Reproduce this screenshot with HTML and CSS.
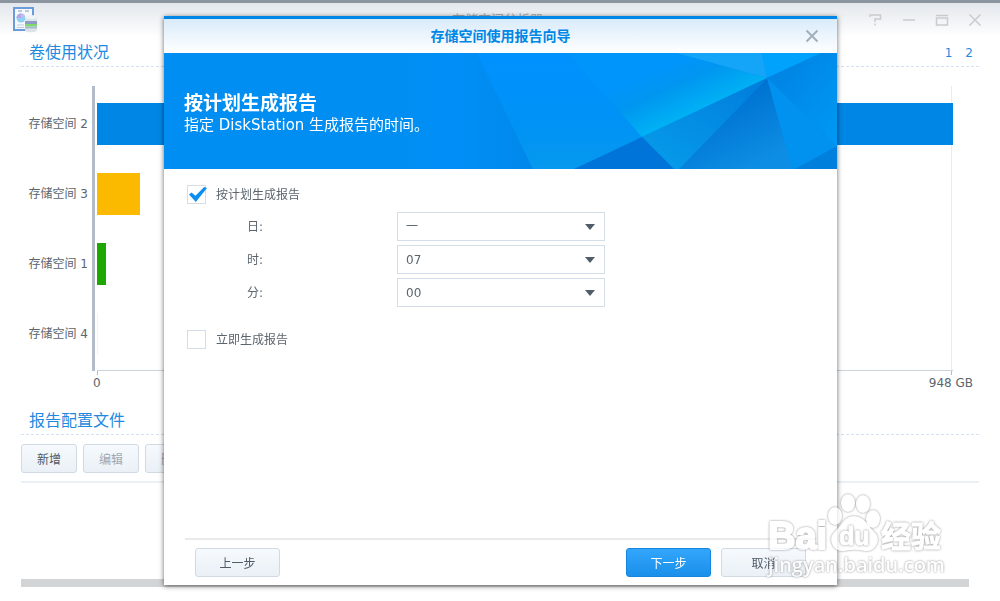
FILE: index.html
```html
<!DOCTYPE html>
<html lang="zh-CN">
<head>
    <meta charset="UTF-8">
    <meta name="viewport" content="width=device-width, initial-scale=1.0">
    <title>存储空间分析器</title>
    <link rel="stylesheet" href="styles.css">
</head>
<body>
    <div class="window">
        <header class="window-header">
            <svg class="app-icon" width="24" height="26" viewBox="0 0 24 26">
                <rect x="1" y="1" width="19" height="22" fill="#f5f8fd" stroke="#6c9bdc" stroke-width="2"/>
                <path d="M5 4h4M12 4h4" stroke="#a9b8cc" stroke-width="1.5"/>
                <circle cx="8" cy="11" r="4.5" fill="#8fd0f5"/>
                <path d="M8 11V6.500a4.500 4.500 0 0 0-4.500 4.500z" fill="#b9a5e6"/>
                <path d="M8 11l4-2a4.500 4.500 0 0 0-4-2.500z" fill="#c9b8ee"/>
                <path d="M4 18h7M4 20.500h7" stroke="#c3ccd6"/>
                <path d="M12 10v13c0 3 12 3 12 0V10z" fill="#dce4ea"/>
                <ellipse cx="18" cy="10" rx="6" ry="2" fill="#eef3f6"/>
                <path d="M12 14h12v3H12z" fill="#8d9bc6"/>
                <path d="M12 17h12v2.500H12z" fill="#7fd96c"/>
                <path d="M12 19.500h12v2H12z" fill="#a5bdc6"/>
            </svg>
            <h1 class="window-title">存储空间分析器</h1>
            <div class="window-controls">
                <button type="button" class="icon-button" aria-label="帮助">
                    <svg width="14" height="12" viewBox="0 0 14 12"><path d="M1 3V1h10.500v4H6v3M6 9.500v2"/></svg>
                </button>
                <button type="button" class="icon-button" aria-label="最小化">
                    <svg width="14" height="12" viewBox="0 0 14 12"><path d="M1 6h12"/></svg>
                </button>
                <button type="button" class="icon-button" aria-label="最大化">
                    <svg width="14" height="12" viewBox="0 0 14 12"><path d="M1 1.500h12M1.500 4h11v7h-11z"/></svg>
                </button>
                <button type="button" class="icon-button" aria-label="关闭">
                    <svg width="14" height="12" viewBox="0 0 14 12"><path d="M1.500 .5l11 11M12.500 .5l-11 11"/></svg>
                </button>
            </div>
        </header>

        <main class="content">
            <div class="section-header">
                <h2>卷使用状况</h2>
                <nav class="pager">
                    <a href="#page1">1</a>
                    <a href="#page2">2</a>
                </nav>
            </div>

            <div class="chart">
                <div class="chart-labels">
                    <span>存储空间 2</span>
                    <span>存储空间 3</span>
                    <span>存储空间 1</span>
                    <span>存储空间 4</span>
                </div>
                <div class="chart-plot">
                    <div class="bar bar-blue" style="width: 100%"></div>
                    <div class="bar bar-yellow" style="width: 5%"></div>
                    <div class="bar bar-green" style="width: 1%"></div>
                    <div class="bar bar-empty" style="width: 0"></div>
                </div>
            </div>
            <div class="chart-scale">
                <span>0</span>
                <span>948 GB</span>
            </div>

            <div class="section-header">
                <h2>报告配置文件</h2>
            </div>
            <div class="toolbar">
                <button type="button" class="button">新增</button>
                <button type="button" class="button" disabled>编辑</button>
                <button type="button" class="button" disabled>删除</button>
            </div>
            <div class="profile-list"></div>
        </main>
    </div>

    <div class="overlay">
        <form class="dialog" role="dialog" aria-labelledby="wizardTitle">
            <div class="dialog-header">
                <h2 id="wizardTitle">存储空间使用报告向导</h2>
                <button type="button" class="icon-button" aria-label="关闭">
                    <svg width="14" height="14" viewBox="0 0 14 14"><path d="M1.500 1.500l11 11M12.500 1.500l-11 11"/></svg>
                </button>
            </div>

            <div class="banner">
                <svg class="banner-art" viewBox="0 0 674 116" preserveAspectRatio="xMaxYMid slice">
                    <defs>
                        <linearGradient id="fold" x1="0" y1="0" x2="1" y2="0">
                            <stop offset="0" stop-color="#008ef2"/>
                            <stop offset=".4" stop-color="#008ff7"/>
                            <stop offset="1" stop-color="#0088ea"/>
                        </linearGradient>
                        <linearGradient id="mid" x1="0" y1="0" x2="0" y2="1">
                            <stop offset="0" stop-color="#0091ff"/>
                            <stop offset=".6" stop-color="#0092f5"/>
                            <stop offset="1" stop-color="#0699ee"/>
                        </linearGradient>
                        <linearGradient id="cyan" gradientUnits="userSpaceOnUse" x1="520" y1="5" x2="545" y2="60">
                            <stop offset="0" stop-color="#0095fa"/>
                            <stop offset=".35" stop-color="#0096f0"/>
                            <stop offset="1" stop-color="#00b6f5"/>
                        </linearGradient>
                        <linearGradient id="deep" x1="0" y1="0" x2=".6" y2="1">
                            <stop offset="0" stop-color="#006bcb"/>
                            <stop offset=".4" stop-color="#0074d2"/>
                            <stop offset="1" stop-color="#0d8de4"/>
                        </linearGradient>
                        <linearGradient id="wing" x1="1" y1="0" x2=".2" y2="1">
                            <stop offset="0" stop-color="#007cdb"/>
                            <stop offset="1" stop-color="#069aea"/>
                        </linearGradient>
                        <linearGradient id="side" x1="0" y1="0" x2="1" y2="1">
                            <stop offset="0" stop-color="#0080e0"/>
                            <stop offset="1" stop-color="#0099f5"/>
                        </linearGradient>
                    </defs>
                    <path d="M240 0h74l56 116H240z" fill="url(#fold)"/>
                    <path d="M314 0h90l75 84-68 32h-41z" fill="url(#mid)"/>
                    <path d="M404 0h110l90 25-125 59z" fill="url(#cyan)"/>
                    <path d="M514 0h85l5 25z" fill="#15a5f8"/>
                    <path d="M599 0h59l-54 25z" fill="#00a2fc"/>
                    <path d="M658 0h16v93l-70-68z" fill="url(#side)"/>
                    <path d="M604 25l70 68-40 23h-5z" fill="#0092ee"/>
                    <path d="M604 25l25 91H516z" fill="url(#deep)"/>
                    <path d="M604 25l-88 91h-5l-32-32z" fill="url(#wing)"/>
                    <path d="M479 84l32 32H411z" fill="#0074d8"/>
                    <path d="M674 93v23h-42z" fill="#0080dc"/>
                </svg>
                <div class="banner-text">
                    <h3>按计划生成报告</h3>
                    <p>指定 DiskStation 生成报告的时间。</p>
                </div>
            </div>

            <div class="dialog-body">
                <div class="check-row">
                    <input type="checkbox" id="schedule" checked>
                    <label for="schedule">按计划生成报告</label>
                </div>
                <div class="fields">
                    <label for="day">日:</label>
                    <div class="select-box">
                        <select id="day"><option>一</option></select>
                    </div>
                    <label for="hour">时:</label>
                    <div class="select-box">
                        <select id="hour"><option>07</option></select>
                    </div>
                    <label for="minute">分:</label>
                    <div class="select-box">
                        <select id="minute"><option>00</option></select>
                    </div>
                </div>
                <div class="check-row">
                    <input type="checkbox" id="now">
                    <label for="now">立即生成报告</label>
                </div>
            </div>

            <div class="dialog-footer">
                <button type="button" class="button">上一步</button>
                <button type="button" class="button button-primary">下一步</button>
                <button type="button" class="button">取消</button>
            </div>
        </form>
    </div>

    <svg class="watermark" width="184" height="90" viewBox="0 0 184 90">
        <text class="mark-brand" x="2" y="56">Bai</text>
        <g class="mark-paw">
            <ellipse cx="69" cy="23" rx="6" ry="8"/>
            <ellipse cx="82" cy="10" rx="6" ry="8"/>
            <ellipse cx="97" cy="11" rx="6" ry="8"/>
            <ellipse cx="107" cy="26" rx="6" ry="8"/>
            <path d="M88 24c-10 0-12 10-18 15-8 7-2 19 8 18 8-2 13-2 21 0 10 1 16-11 8-18-6-5-9-15-19-15z"/>
        </g>
        <text class="mark-du" x="73" y="52">du</text>
        <text class="mark-cn" x="115" y="54">经验</text>
        <text class="mark-url" x="2" y="79">jingyan.baidu.com</text>
    </svg>
</body>
</html>
```
FILE: styles.css
```css
:root {
    --blue: #0086e5;
    --link-blue: #1f8ae0;
    --text: #5b656e;
    --line: #d5dee8;
}

* {
    box-sizing: border-box;
}

body {
    margin: 0;
    font-family: "DejaVu Sans", "Noto Sans CJK SC", sans-serif;
    font-size: 12px;
    line-height: 18px;
    color: var(--text);
    background: #ffffff;
    overflow: hidden;
}

h1, h2, h3, p {
    margin: 0;
    font-weight: normal;
}

button, select {
    font: inherit;
    color: inherit;
}

/* Main window */
.window {
    height: 100vh;
    display: flex;
    flex-direction: column;
    border-top: 3px solid #8b95a0;
}

.window-header {
    display: grid;
    grid-template-columns: 1fr auto 1fr;
    align-items: center;
    height: 34px;
    padding: 0 18px 0 13px;
    background: linear-gradient(#e3e7ec, #ffffff);
}

.window-title {
    font-size: 13px;
    color: #a9adb1;
}

.window-controls {
    display: flex;
    justify-content: flex-end;
    gap: 19px;
}

.icon-button {
    display: flex;
    padding: 0;
    border: none;
    background: none;
    color: #c9cccf;
    cursor: pointer;
}

.icon-button svg {
    fill: none;
    stroke: currentColor;
    stroke-width: 2;
}

.window-controls svg {
    stroke-width: 1.5px;
}

.content {
    flex: 1;
    display: flex;
    flex-direction: column;
    padding: 0 21px 14px;
}

.section-header {
    display: flex;
    align-items: center;
    justify-content: space-between;
    height: 30px;
    padding: 2px 6px 0 8px;
    border-bottom: 1px dashed #d3e2f0;
}

.section-header h2 {
    font-size: 16px;
    line-height: 24px;
    color: var(--link-blue);
}

.pager {
    display: flex;
    gap: 13px;
}

.pager a {
    color: var(--link-blue);
    text-decoration: none;
}

/* Usage chart */
.chart {
    display: flex;
    margin-top: 19px;
    padding-right: 26px;
}

.chart-labels {
    display: flex;
    flex-direction: column;
    gap: 28px;
    width: 74px;
    padding: 17px 4px 16px 0;
    border-right: 3px solid #b4bcc9;
    text-align: right;
    white-space: nowrap;
}

.chart-labels span {
    line-height: 42px;
}

.chart-plot {
    flex: 1;
    display: flex;
    flex-direction: column;
    gap: 28px;
    margin-left: 2px;
    padding: 17px 0 15px;
    border-bottom: 1px solid #cbd3db;
    background: linear-gradient(#e4eef6, #e4eef6) right 1px top / 1px 100% no-repeat;
}

.bar {
    height: 42px;
}

.bar-blue {
    background: var(--blue);
}

.bar-yellow {
    background: #fbb900;
}

.bar-green {
    background: #1da700;
}

.bar-empty {
    border-left: 1px solid #f6f0f2;
}

.chart-scale {
    display: flex;
    justify-content: space-between;
    height: 34px;
    margin: 0 6px 0 72px;
    padding-top: 3px;
    background:
        linear-gradient(#b4bcc9, #b4bcc9) left 4px top / 1px 4px no-repeat,
        linear-gradient(#b4bcc9, #b4bcc9) right 21px top / 1px 4px no-repeat;
}

.toolbar {
    display: flex;
    gap: 6px;
    padding: 9px 0 8px;
    border-bottom: 2px solid #eaf0f6;
}

.profile-list {
    flex: 1;
    margin-right: 10px;
    border-bottom: 8px solid #d2d4d6;
}

.button {
    height: 29px;
    min-width: 56px;
    padding: 2px 8px 0;
    border: 1px solid #cfdae5;
    border-radius: 3px;
    background: linear-gradient(#f6faff, #eaf0f5);
    color: #505a64;
}

.button:disabled {
    color: #9fa7b0;
}

/* Report wizard */
.overlay {
    position: fixed;
    inset: 0;
    display: flex;
    justify-content: center;
    padding: 16px 0 16px 1px;
}

.dialog {
    display: flex;
    flex-direction: column;
    width: 100%;
    max-width: 673px;
    border-top: 3px solid var(--blue);
    background: #ffffff;
    box-shadow: 0 1px 5px rgba(0, 0, 0, 0.6);
}

.dialog-header {
    display: grid;
    grid-template-columns: 1fr auto 1fr;
    align-items: center;
    height: 34px;
    padding: 0 18px;
    background: linear-gradient(#d9ebfa, #ffffff);
}

.dialog-header h2 {
    grid-column: 2;
    font-size: 14px;
    line-height: 20px;
    font-weight: bold;
    color: var(--blue);
}

.dialog-header .icon-button {
    justify-self: end;
    color: #a3afba;
}

.banner {
    display: grid;
    height: 116px;
    background: #008ef2;
    color: #ffffff;
}

.banner-art,
.banner-text {
    grid-area: 1 / 1;
}

.banner-art {
    width: 100%;
    height: 116px;
}

.banner-text {
    z-index: 1;
    padding: 38px 20px 0;
}

.banner-text h3 {
    font-size: 19px;
    line-height: 24px;
    font-weight: bold;
}

.banner-text p {
    font-size: 15px;
    line-height: 20px;
}

.dialog-body {
    flex: 1;
    padding: 16px 23px;
}

.check-row {
    display: flex;
    align-items: center;
    gap: 10px;
}

.check-row input {
    appearance: none;
    position: relative;
    width: 19px;
    height: 19px;
    margin: 0;
    border: 1px solid var(--line);
    background: #ffffff;
}

.check-row input:checked::after {
    content: "";
    position: absolute;
    left: 1px;
    top: 1px;
    width: 18px;
    height: 15px;
    background: #0d8ff0;
    clip-path: polygon(0 50%, 14% 36%, 36% 58%, 84% 0, 100% 6%, 38% 100%);
}

.fields {
    display: grid;
    grid-template-columns: 150px 208px;
    align-items: center;
    row-gap: 4px;
    margin: 8px 0 23px 60px;
}

.select-box {
    position: relative;
}

.select-box select {
    display: block;
    appearance: none;
    width: 100%;
    height: 29px;
    padding: 0 28px 0 8px;
    border: 1px solid var(--line);
    border-radius: 0;
    background: #ffffff;
}

.select-box::after {
    content: "";
    position: absolute;
    right: 10px;
    top: 12px;
    border: 5px solid transparent;
    border-top: 6px solid #505c68;
    border-bottom: none;
    pointer-events: none;
}

.dialog-footer {
    display: flex;
    gap: 10px;
    margin: 0 21px;
    padding: 8px 10px;
    border-top: 2px solid #e9eaec;
}

.dialog-footer .button {
    min-width: 85px;
}

.dialog-footer .button:first-child {
    margin-right: auto;
}

.dialog-footer .button-primary {
    border-color: #1488e0;
    background: linear-gradient(#33a5fc, #1a90ea);
    color: #ffffff;
}

/* Site mark in the corner */
.watermark {
    position: fixed;
    right: 50px;
    bottom: 18px;
    overflow: visible;
    pointer-events: none;
    opacity: 0.75;
    fill: #ffffff;
    stroke: #ffffff;
    stroke-width: 2px;
    stroke-linejoin: round;
    font-weight: bold;
}

.watermark text,
.mark-paw {
    filter: drop-shadow(0 0 1px #707070);
}

.mark-brand {
    font-family: "Liberation Sans", sans-serif;
    font-size: 38px;
}

.mark-du {
    font-family: "Liberation Sans", sans-serif;
    font-size: 25px;
    stroke-width: 1px;
}

.mark-cn {
    font-family: "Noto Sans CJK SC", sans-serif;
    font-size: 30px;
    stroke-width: 1px;
}

.mark-url {
    font-family: "Open Sans", sans-serif;
    font-size: 20px;
    font-weight: 600;
    stroke-width: 0;
}
```
